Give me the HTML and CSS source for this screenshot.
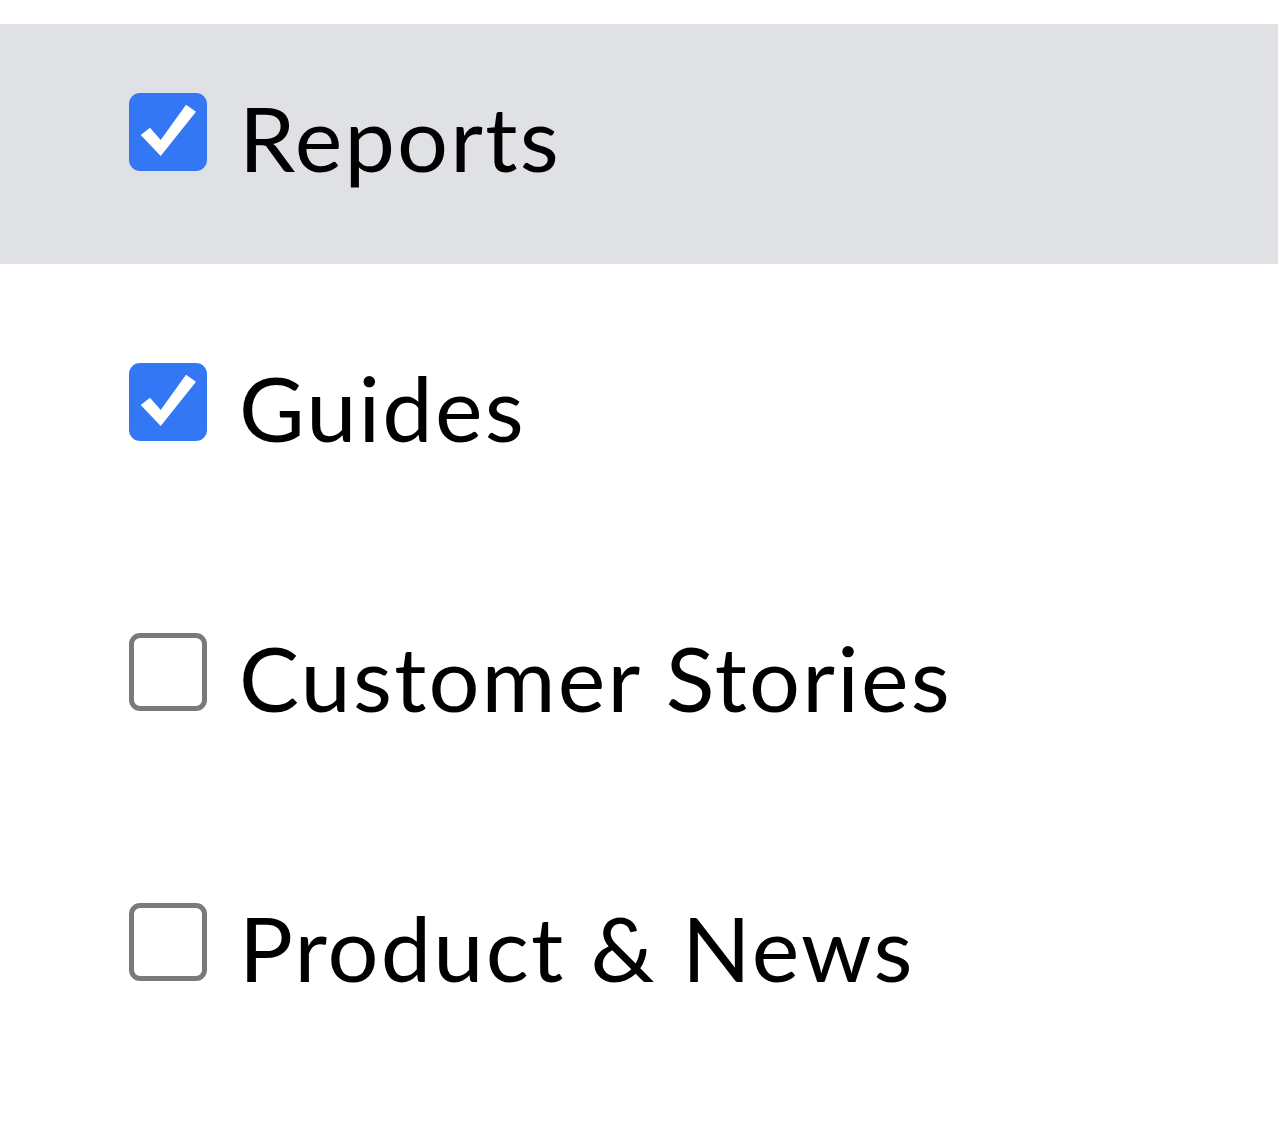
FILE: index.html
```html
<!DOCTYPE html>
<html lang="en">
<head>
<meta charset="utf-8">
<title>Filters</title>
<link rel="stylesheet" href="styles.css">
</head>
<body>
<ul class="filter-list">
  <li class="filter-item is-hover">
    <span class="box is-checked">
      <svg viewBox="0 0 78 78" width="78" height="78"><polygon points="11.7,42 21,34.7 31.7,47 57,11.7 67,18.7 31.7,63" fill="#fff"/></svg>
    </span>
    <span class="label">Reports</span>
  </li>
  <li class="filter-item">
    <span class="box is-checked">
      <svg viewBox="0 0 78 78" width="78" height="78"><polygon points="11.7,42 21,34.7 31.7,47 57,11.7 67,18.7 31.7,63" fill="#fff"/></svg>
    </span>
    <span class="label">Guides</span>
  </li>
  <li class="filter-item">
    <span class="box"></span>
    <span class="label">Customer Stories</span>
  </li>
  <li class="filter-item">
    <span class="box"></span>
    <span class="label">Product &amp; News</span>
  </li>
</ul>
</body>
</html>
```
FILE: styles.css
```css
html, body {
  margin: 0;
  padding: 0;
  background: #fff;
}
.filter-list {
  list-style: none;
  margin: 0;
  padding: 24px 0 0;
  display: flex;
  flex-direction: column;
  gap: 30px;
  font-family: "Lato", "Open Sans", sans-serif;
}
.filter-item {
  height: 240px;
  box-sizing: border-box;
  padding: 69px 0 0 129px;
  display: flex;
  align-items: flex-start;
  gap: 32px;
}
.filter-item.is-hover {
  background: #e0e1e5;
}
.box {
  width: 78px;
  height: 78px;
  box-sizing: border-box;
  border: 5px solid #7a7a7a;
  border-radius: 11px;
  flex: none;
  display: block;
  background: #fff;
}
.box.is-checked {
  border: none;
  background: #3377f5;
}
.box svg {
  display: block;
}
.label {
  font-size: 90px;
  line-height: 78px;
  padding-top: 5px;
  color: #000;
  letter-spacing: 2.2px;
}
```
